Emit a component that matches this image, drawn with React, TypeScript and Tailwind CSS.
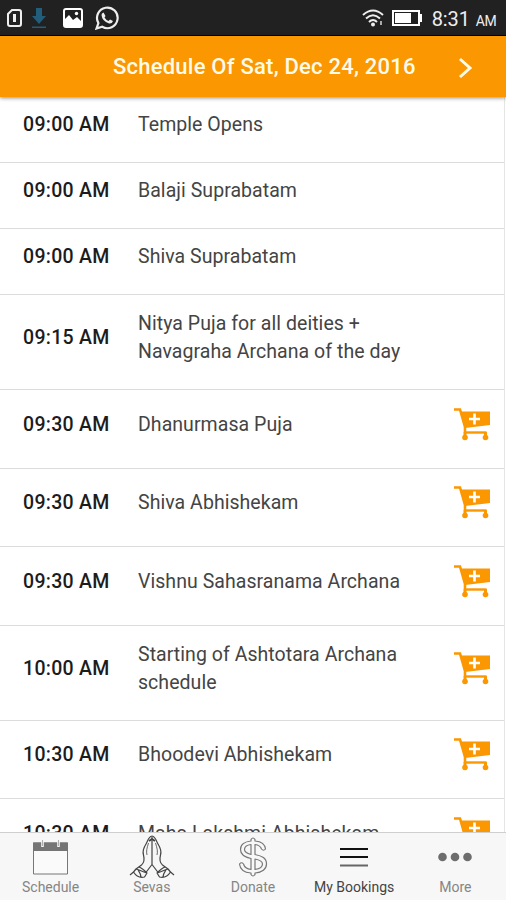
import React from 'react'

interface ScheduleItem {
  time: string
  title: string
  height: string
  bookable?: boolean
}

interface Tab {
  name: string
  icon: React.ComponentType
  active?: boolean
}

const schedule: ScheduleItem[] = [
  { time: '09:00 AM', title: 'Temple Opens', height: 'h-[66px]' },
  { time: '09:00 AM', title: 'Balaji Suprabatam', height: 'h-[66px]' },
  { time: '09:00 AM', title: 'Shiva Suprabatam', height: 'h-[66px]' },
  { time: '09:15 AM', title: 'Nitya Puja for all deities + Navagraha Archana of the day', height: 'h-[95px]' },
  { time: '09:30 AM', title: 'Dhanurmasa Puja', height: 'h-[79px]', bookable: true },
  { time: '09:30 AM', title: 'Shiva Abhishekam', height: 'h-[78px]', bookable: true },
  { time: '09:30 AM', title: 'Vishnu Sahasranama Archana', height: 'h-[79px]', bookable: true },
  { time: '10:00 AM', title: 'Starting of Ashtotara Archana schedule', height: 'h-[95px]', bookable: true },
  { time: '10:30 AM', title: 'Bhoodevi Abhishekam', height: 'h-[78px]', bookable: true },
  { time: '10:30 AM', title: 'Maha Lakshmi Abhishekam', height: 'h-[79px]', bookable: true }
]

function CartIcon() {
  return (
    <svg className="h-[34px] w-[38px]" viewBox="0 0 38 34" fill="none" aria-hidden="true">
      <path d="M1 1.5H7L12 19V24.5" stroke="#fb9700" strokeWidth="2.6" />
      <path d="M7.5 3.5H37V17L12 20Z" fill="#fb9700" />
      <path d="M11 24.5H33.5" stroke="#fb9700" strokeWidth="2.4" />
      <path d="M12 24V29M32.5 24V29" stroke="#fb9700" strokeWidth="3" />
      <circle cx="12" cy="29.5" r="2.8" fill="#fb9700" />
      <circle cx="32.5" cy="29.5" r="2.8" fill="#fb9700" />
      <path d="M21.5 5.5V16.5M16 11H27" stroke="#fff" strokeWidth="2.6" />
    </svg>
  )
}

function CalendarIcon() {
  return (
    <svg className="h-[35px] w-[35px]" viewBox="0 0 35 35" fill="none">
      <path d="M.5 3H34.5V34H.5Z" fill="#fafafa" stroke="#777" />
      <path d="M0 2.5H35V11H0Z" fill="#757575" />
      <path d="M9.5 0V7M25.5 0V7" stroke="#f7f7f7" strokeWidth="2.6" />
      <path d="M9.5 0V6M25.5 0V6" stroke="#999" strokeWidth="0.8" />
    </svg>
  )
}

function PrayerIcon() {
  return (
    <svg className="h-11 w-[46px]" viewBox="0 0 46 44" fill="none" stroke="#444" strokeWidth="1.2" strokeLinejoin="round">
      <path d="M23 1C19 2 19 6 17 9C14.5 13 13.5 17 14.5 20C15.5 24 15 28 12.5 30L7 34" />
      <path d="M23 1C27 2 27 6 29 9C31.5 13 32.5 17 31.5 20C30.5 24 31 28 33.5 30L39 34" />
      <path d="M23 2V29.5L16.5 38M23 29.5L29.5 38" />
      <path d="M19.5 8C18 13 17 16 18 20M26.5 8C28 13 29 16 28 20" strokeWidth="0.8" />
      <path d="M20 6L23 4L26 6" strokeWidth="2" />
      <path d="M7 34C10 34.5 13 37 18 38L15.5 42C11 43 7 41 4.5 37ZM4.5 37L1 40M9 35C11 38 12 39 12 42M10 32C13 33 16 36 18 38" />
      <path d="M39 34C36 34.5 33 37 28 38L30.5 42C35 43 39 41 41.5 37ZM41.5 37L45 40M37 35C35 38 34 39 34 42M36 32C33 33 30 36 28 38" />
    </svg>
  )
}

// outlined dollar sign with the bar showing above and below the curve
function DollarIcon() {
  return (
    <svg className="h-10 w-8" viewBox="0 0 32 40" fill="none" stroke="#777" strokeWidth="1.2" strokeLinejoin="round">
      <path d="M14 4V2.5Q16 -.5 18 2.5V4C24 4.5 28 7 28.5 12Q26.5 14.5 24.5 12C23.5 9 21.5 8 18 7.5V17.5C25 19 29.500 21 29.500 27C29.500 32 25 35.500 18 36V37.500Q16 40.500 14 37.500V36C7 35.500 3 32 2.500 27Q4.500 24.500 6.500 27C7.500 30.500 10 32 14 32.500V21.500C7 20 3.500 17.500 3.500 12.500C3.500 7.500 8 4.500 14 4Z" />
      <path d="M14 7.500C10 8 7.500 9.500 7.500 12.500C7.500 15.500 10 16.500 14 17.500ZM18 22V32.500C22 32 25.500 30.500 25.500 27C25.500 24 22 22.800 18 22Z" />
    </svg>
  )
}

function MenuIcon() {
  return (
    <svg className="h-5 w-7" viewBox="0 0 28 20" strokeWidth="2">
      <path d="M0 2H28M0 10H28" stroke="#111" />
      <path d="M0 18.5H28" stroke="#666" />
    </svg>
  )
}

function MoreIcon() {
  return (
    <svg className="h-2.5 w-[34px]" viewBox="0 0 34 10" fill="#6d6d6d">
      <circle cx="4.5" cy="5" r="4.3" />
      <circle cx="17" cy="5" r="4.3" />
      <circle cx="29.5" cy="5" r="4.3" />
    </svg>
  )
}

const tabs: Tab[] = [
  { name: 'Schedule', icon: CalendarIcon },
  { name: 'Sevas', icon: PrayerIcon },
  { name: 'Donate', icon: DollarIcon },
  { name: 'My Bookings', icon: MenuIcon, active: true },
  { name: 'More', icon: MoreIcon }
]

function StatusBar() {
  return (
    <div className="flex h-9 shrink-0 items-center justify-between border-b border-black bg-[#212121] pr-2.5 pl-[7px] text-[#eee]">
      <div className="flex items-center">
        <svg className="h-5 w-4" viewBox="0 0 16 20" fill="none" stroke="#eee" strokeWidth="2">
          <path d="M5 2H12Q14 2 14 4V16Q14 18 12 18H3Q1 18 1 16V6Z" />
          <path d="M7.5 6V14" strokeWidth="3" />
        </svg>
        <svg className="ml-2 h-6 w-4" viewBox="0 0 16 24" fill="#225d7b">
          <path d="M5 2H11V10H15L8 18L1 10H5ZM1 20.5H15V22H1Z" />
        </svg>
        <svg className="ml-4 h-5 w-5" viewBox="0 0 20 20" fill="none">
          <rect x="1" y="1" width="18" height="18" rx="2" stroke="#fff" strokeWidth="2" />
          <path d="M1 12L6 7L10 12L14 9L19 14V19H1Z" fill="#fff" />
          <circle cx="13.5" cy="5.5" r="1.7" fill="#fff" />
        </svg>
        <svg className="ml-3 h-6 w-6" viewBox="0 0 24 24" fill="none">
          <path d="M1.5 22.5L3.4 17A10.3 10.3 0 1 1 7.2 20.8Z" stroke="#eee" strokeWidth="2.2" />
          <path d="M8.500 6.500L10.500 10L9.500 11.500Q11 14 13.500 15L15 13.500L18 15Q17 18 14 17.500Q7 15 6.500 9Q6.500 7 8.500 6.500Z" fill="#eee" />
        </svg>
      </div>
      <div className="flex items-center">
        <svg className="h-[18px] w-[22px]" viewBox="0 0 22 18" fill="none" stroke="#eee" strokeWidth="2">
          <path d="M1 6Q11-3 21 6M4 9.5Q11 3 18 9.5M7 13Q11 9 15 13" />
          <circle cx="11" cy="15.5" r="1" fill="#eee" />
          <path d="M19 12V16" stroke="#aaa" />
        </svg>
        <svg className="ml-2 h-4 w-[30px]" viewBox="0 0 30 16">
          <rect x="1" y="1" width="26" height="14" fill="none" stroke="#fff" strokeWidth="2" />
          <path d="M3 3H19V13H3ZM28 4H30V12H28Z" fill="#fff" />
        </svg>
        <div className="ml-2.5 flex items-baseline pt-0.5">
          <span className="text-[20px] tracking-[-0.1px]">8:31</span>
          <span className="ml-1.5 text-[14px] tracking-[-0.6px]">AM</span>
        </div>
      </div>
    </div>
  )
}

export default function App() {
  return (
    <div className="flex h-[900px] w-[506px] flex-col overflow-hidden bg-white font-[Roboto,sans-serif]">
      <StatusBar />

      <header className="z-10 flex h-[61px] shrink-0 items-center bg-[#fb9700] pl-[113px] text-[#fffbe9] shadow-[0_1px_4px_rgba(0,0,0,0.45)]">
        <h1 className="w-[303px] text-[22px] font-medium tracking-[0.23px] whitespace-nowrap">Schedule Of Sat, Dec 24, 2016</h1>
        <button type="button" aria-label="Next day" className="ml-[42px] pt-[3px]">
          <svg className="h-[22px] w-[15px]" viewBox="0 0 15 22" fill="none" stroke="currentColor" strokeWidth="3">
            <path d="M2 2L12 11L2 20" />
          </svg>
        </button>
      </header>

      <ul className="mr-px min-h-0 flex-1 overflow-hidden border-r border-[#e5e5e5]">
        {schedule.map((item, index) => (
          <li key={index} className={`flex items-center border-b border-[#dcdcdc] pb-[9px] pl-[23px] text-[19.5px] leading-[28px] ${item.height}`}>
            <span className="w-[115px] shrink-0 font-medium tracking-[0.3px] text-[#1c1c1c]">{item.time}</span>
            <span className="w-[290px] shrink-0 tracking-[0.05px] text-[#444]">{item.title}</span>
            {item.bookable && (
              <button type="button" aria-label="Book" className="ml-[25px] shrink-0">
                <CartIcon />
              </button>
            )}
          </li>
        ))}
      </ul>

      <nav className="grid h-[68px] shrink-0 grid-cols-5 border-t border-[#cfcfcf] bg-[#f7f7f7]">
        {tabs.map(tab => (
          <a key={tab.name} href="#" className={`flex flex-col items-center text-[14px] leading-3 ${tab.active ? 'text-[#444]' : 'text-[#858585]'}`}>
            <span className="flex h-12 items-center">
              <tab.icon />
            </span>
            <span className="whitespace-nowrap">{tab.name}</span>
          </a>
        ))}
      </nav>
    </div>
  )
}
